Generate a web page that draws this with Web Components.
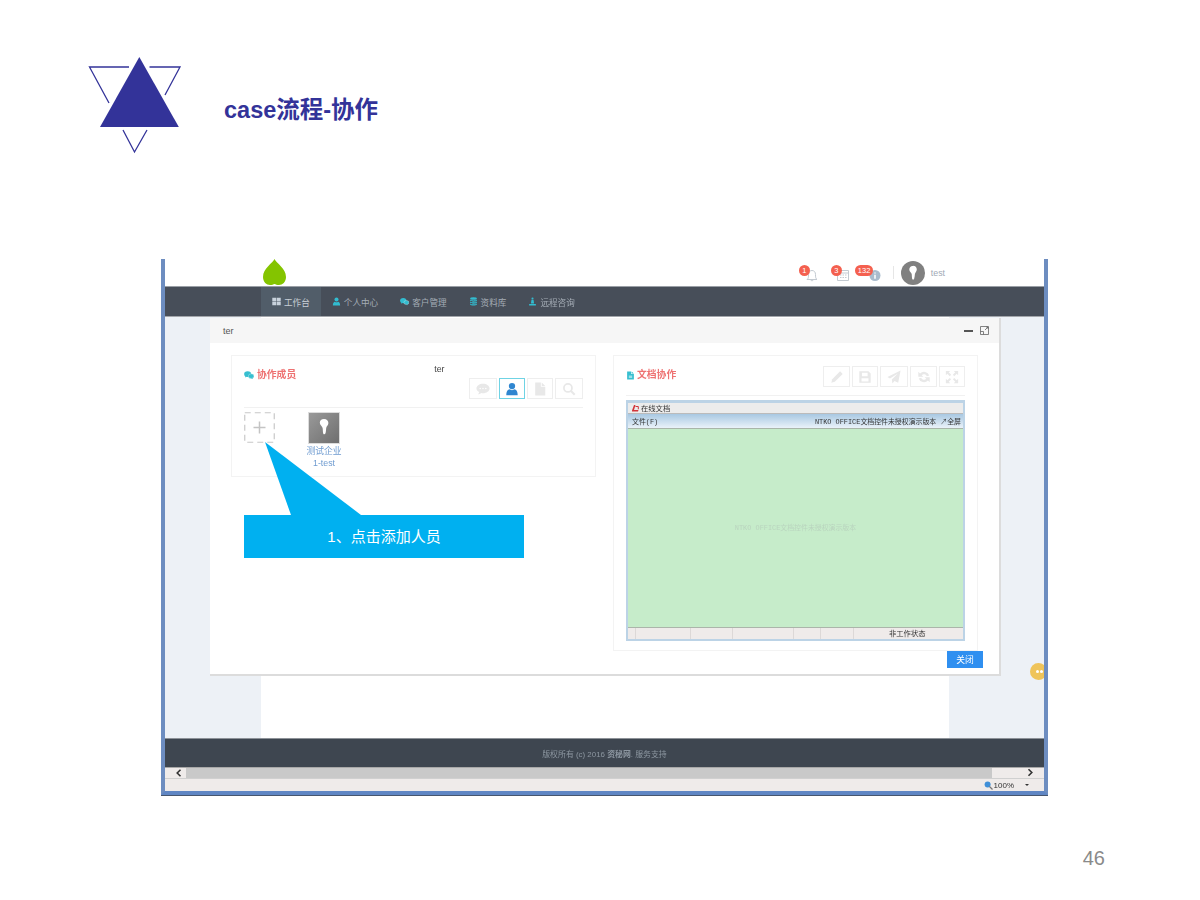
<!DOCTYPE html>
<html lang="zh">
<head>
<meta charset="utf-8">
<title>case流程-协作</title>
<style>
    html, body { margin: 0; background: #fff; }
    body { font-family: "Liberation Sans", "Noto Sans CJK SC", sans-serif; }
</style>
</head>
<body>
<slide-page number="46">
    <slide-header slot="header">case流程-协作</slide-header>
    <browser-window>
        <top-bar slot="top"></top-bar>
        <app-nav slot="nav">
            <nav-item icon="grid" active>工作台</nav-item>
            <nav-item icon="user">个人中心</nav-item>
            <nav-item icon="chat">客户管理</nav-item>
            <nav-item icon="db">资料库</nav-item>
            <nav-item icon="lamp">远程咨询</nav-item>
        </app-nav>
        <modal-dialog slot="modal" heading="ter">
            <panel-card heading="协作成员" icon="chat" head="52">
                <span slot="note">ter</span>
                <tool-bar slot="tools" top="23">
                    <tool-button icon="comment" w="28"></tool-button>
                    <tool-button icon="user" w="26" active></tool-button>
                    <tool-button icon="file" w="26"></tool-button>
                    <tool-button icon="search" w="28"></tool-button>
                </tool-bar>
                <member-list>
                    <member-card>测试企业<br>1-test</member-card>
                </member-list>
            </panel-card>
            <panel-card heading="文档协作" icon="file" head="40">
                <tool-bar slot="tools" top="11">
                    <tool-button icon="pencil" w="27"></tool-button>
                    <tool-button icon="save" w="26"></tool-button>
                    <tool-button icon="send" w="28"></tool-button>
                    <tool-button icon="refresh" w="27"></tool-button>
                    <tool-button icon="expand" w="26"></tool-button>
                </tool-bar>
                <office-control></office-control>
            </panel-card>
        </modal-dialog>
        <span slot="footer">版权所有 (c) 2016 <b>资秘网</b>. 服务支持</span>
    </browser-window>
    <call-out slot="over">1、点击添加人员</call-out>
</slide-page>

<script>
const ICONS = {
    grid: '<path d="M.5 1.500h7v6h-7zM8.500 1.500h7v6h-7zM.5 8.500h7v6h-7zM8.500 8.500h7v6h-7z"/>',
    user: '<circle cx="8" cy="4.600" r="3.600"/><path d="M1.500 15c0-4.500 2-6.400 3.600-6.600 1.800 1.200 4 1.200 5.800 0 1.600.2 3.600 2.100 3.600 6.600z"/>',
    chat: '<ellipse cx="5.800" cy="6.400" rx="5.600" ry="4.600"/><path d="M2.500 9l-.8 2.800 3-1.600z"/><ellipse cx="11.400" cy="9.800" rx="4.500" ry="3.700" stroke="#fff" stroke-width=".5"/><path d="M13 12.500l1.200 2-3-1.300z"/>',
    db: '<ellipse cx="8" cy="2.800" rx="6" ry="2.300"/><path d="M2 4.600c1 2 11 2 12 0v2.200c-1 2-11 2-12 0zM2 8c1 2 11 2 12 0v2.400c-1 2-11 2-12 0zM2 11.500c1 2 11 2 12 0v1.700c-1 2.400-11 2.400-12 0z"/>',
    lamp: '<circle cx="8" cy="2.600" r="1.900"/><path d="M6.200 5h3.600l1 6.500H5.200zM2 12.400h12V15H2z"/>',
    comment: '<path d="M8 2c4.200 0 7.500 2.400 7.500 5.400S12.200 12.800 8 12.800c-.7 0-1.300 0-2-.2-1 1-2.400 1.500-3.800 1.500.8-.8 1.300-1.700 1.400-2.700C1.600 10.400.5 9 .5 7.400.5 4.400 3.800 2 8 2z"/><g fill="#fff"><circle cx="4.800" cy="7.400" r=".9"/><circle cx="8" cy="7.400" r=".9"/><circle cx="11.200" cy="7.400" r=".9"/></g>',
    file: '<path d="M2.500 .5h6.500v5h5V15.500H2.500zM10 .5l4 4h-4z"/>',
    filedoc: '<path d="M2 1h7v4.500h5V15H2zM10 1l4 3.600h-4z"/><path d="M5 8.500h6v1.200H5zM5 11h6v1.200H5z" fill="#fff"/>',
    search: '<circle cx="6.800" cy="6.800" r="4.600" fill="none" stroke="currentColor" stroke-width="2"/><path d="M10.300 10.300l4.200 4.200" stroke="currentColor" stroke-width="2.400" fill="none"/>',
    pencil: '<path d="M11.500 1.500l3 3L5.500 13.500 1.500 14.500l1-4z"/>',
    save: '<path fill-rule="evenodd" d="M1.500 1.500h10.500l2.500 2.500v10.500H1.500zM4.500 3v4h6.500V3zM4 9.500V13h8V9.500z"/>',
    send: '<path d="M15.500 .5L12.800 14.500 8.500 12.500 6.200 15.300 5.500 10.800 12.500 4 3.400 9.600 .5 8z"/>',
    refresh: '<path d="M14 6.400A6.200 6.200 0 0 0 3.500 4L1.500 2v5.800h5.800L5.400 5.900a3.500 3.500 0 0 1 5.900 1.200zM2 9.600A6.200 6.200 0 0 0 12.500 12l2 2V8.200H8.700l1.900 1.900a3.500 3.500 0 0 1-5.900-1.200z"/>',
    expand: '<path d="M1 1h5L4.300 2.700 7 5.400 5.400 7 2.700 4.300 1 6zM15 1v5l-1.700-1.700L10.600 7 9 5.400l2.700-2.700L10 1zM1 15v-5l1.700 1.700L5.400 9 7 10.600l-2.700 2.700L6 15zM15 15h-5l1.700-1.700L9 10.600 10.600 9l2.700 2.700L15 10z"/>'
};

class UiIcon extends HTMLElement {
    connectedCallback() {
        const size = this.getAttribute('size') || 9;
        const name = this.getAttribute('name');
        this.attachShadow({ mode: 'open' }).innerHTML = `
            <style>
                :host { display: inline-flex; flex: none; color: ${this.getAttribute('color') || 'currentColor'}; }
                svg { display: block; fill: currentColor; }
            </style>
            <svg width="${size}" height="${size}" viewBox="0 0 16 16">${ICONS[name] || ''}</svg>`;
    }
}

class SlidePage extends HTMLElement {
    connectedCallback() {
        this.attachShadow({ mode: 'open' }).innerHTML = `
            <style>
                :host { display: block; width: 1200px; height: 900px; overflow: hidden; }
                .shot { position: relative; width: 887px; margin-left: 161px; }
                .number { text-align: right; padding: 52px 95px 0 0; font-size: 20px; line-height: 23px; color: #8a8a8a; }
            </style>
            <slot name="header"></slot>
            <div class="shot">
                <slot></slot>
                <slot name="over"></slot>
            </div>
            <div class="number">${this.getAttribute('number')}</div>`;
    }
}

class SlideHeader extends HTMLElement {
    connectedCallback() {
        this.attachShadow({ mode: 'open' }).innerHTML = `
            <style>
                :host { display: flex; height: 259px; box-sizing: border-box; padding: 56px 0 0 88px; align-items: flex-start; }
                svg { display: block; flex: none; }
                h1 { margin: 27px 0 0 42px; font-size: 23.500px; line-height: 54px; font-weight: bold; color: #333399; white-space: nowrap; }
            </style>
            <svg width="94" height="98" viewBox="88 56 94 98">
                <polygon points="139.300,57 178.800,127 100,127" fill="#333399"/>
                <g fill="none" stroke="#333399" stroke-width="1.300">
                    <polyline points="129,67 89.500,67 109,103"/>
                    <polyline points="149.500,67 180,67 165,95"/>
                    <polyline points="123,130 134.500,152 147,130"/>
                </g>
            </svg>
            <h1><slot></slot></h1>`;
    }
}

class BrowserWindow extends HTMLElement {
    connectedCallback() {
        this.attachShadow({ mode: 'open' }).innerHTML = `
            <style>
                :host { display: block; height: 536px; box-sizing: border-box; background: #fff;
                    border: 4px solid #6d8dc0; border-top: 0; border-bottom-color: #5f86c4;
                    box-shadow: 0 1px 0 #47566e; filter: blur(.35px); }
                .main { position: relative; height: 421px; background: #edf1f6; }
                .column { height: 421px; width: 688px; margin-left: 96px; background: #fff; }
                footer { height: 29px; background: #3e4650; border-top: 1px solid #8d9298; box-sizing: border-box;
                    display: flex; align-items: center; justify-content: center;
                    font-size: 7.900px; color: #8d97a1; }
                .scroll { display: flex; height: 11px; background: #efebea; border-top: 1px solid #a8a8a8; box-sizing: border-box; }
                .arrow { width: 21px; box-sizing: border-box; padding-left: 10px; display: flex; align-items: center; }
                .track { width: 806px; background: #c9c9c9; }
                .rest { flex: 1; display: flex; justify-content: flex-end; padding-right: 10px; }
                .scroll svg { display: block; }
                .status { height: 13px; background: #efebea; border-top: 1px solid #d0d0d0; box-sizing: border-box;
                    display: flex; align-items: center; justify-content: flex-end; gap: 1px; padding-right: 15px;
                    font-size: 8px; color: #333; }
                .status svg { display: block; }
                .caret { width: 0; height: 0; border: 2.500px solid transparent; border-top-color: #333; border-bottom: 0; margin-left: 10px; }
                .bubble { position: absolute; right: -3px; top: 346px; width: 17px; height: 17px; border-radius: 50%;
                    background: #efc45a; clip-path: inset(0 3px 0 0); }
                .bubble::before { content: ""; position: absolute; left: 6px; top: 7px; width: 3px; height: 3px; border-radius: 50%;
                    background: #fff; box-shadow: 4px 0 0 #fff; }
            </style>
            <slot name="top"></slot>
            <slot name="nav"></slot>
            <div class="main">
                <div class="column"></div>
                <slot name="modal"></slot>
                <div class="bubble"></div>
            </div>
            <footer><slot name="footer"></slot></footer>
            <div class="scroll">
                <div class="arrow"><svg width="8" height="8" viewBox="0 0 8 8"><path d="M5.500 .8L2.200 4l3.300 3.200" fill="none" stroke="#333" stroke-width="1.600"/></svg></div>
                <div class="track"></div>
                <div class="rest"><svg width="8" height="9" viewBox="0 0 8 8"><path d="M2.500 .8L5.800 4 2.500 7.200" fill="none" stroke="#333" stroke-width="1.600"/></svg></div>
            </div>
            <div class="status">
                <svg width="9" height="9" viewBox="0 0 9 9"><circle cx="3.600" cy="3.400" r="3" fill="#3f8fd8"/><path d="M5.500 5.500L8.500 8.500" stroke="#777" stroke-width="1.300"/></svg>
                <span>100%</span>
                <i class="caret"></i>
            </div>`;
    }
}

class TopBar extends HTMLElement {
    connectedCallback() {
        this.attachShadow({ mode: 'open' }).innerHTML = `
            <style>
                :host { display: flex; height: 28px; background: #fff; box-sizing: border-box; padding-left: 97px; border-bottom: 1px solid #9a9fa6; }
                .leaf { display: block; }
                .right { margin-left: auto; display: flex; align-items: center; padding-right: 99px; }
                .alert { position: relative; display: block; height: 15px; margin-top: 3px; }
                .alert svg { display: block; }
                .badge { position: absolute; top: -2px; height: 11px; min-width: 11px; box-sizing: border-box; padding: 0 2px; border-radius: 6px;
                    background: #f4604f; color: #fff; font-size: 7.500px; line-height: 11px; text-align: center; }
                .bar { width: 1px; height: 13px; background: #e6e6e6; margin: 0 7px 0 12px; }
                .face { width: 24px; height: 24px; display: block; }
                .name { margin-left: 6px; font-size: 8.800px; color: #9fa9b5; }
            </style>
            <svg class="leaf" width="25" height="27" viewBox="0 0 25 27">
                <path d="M12.500 0C14 4 24 9 24 18 24 23 20.500 26 17 26 15 26 13.500 25.400 12.500 25 11.500 25.400 10 26 8 26 4.500 26 1 23 1 18 1 9 11 4 12.500 0z" fill="#84c400"/>
            </svg>
            <div class="right">
                <span class="alert" style="width:32px">
                    <svg width="32" height="15" viewBox="0 0 32 15"><path d="M8 12.500c1.500-1 1.500-2.500 1.500-5 0-2.500 1.500-4 3.500-4s3.500 1.500 3.500 4c0 2.500 0 4 1.500 5zM11.800 13a1.300 1.300 0 0 0 2.400 0" fill="none" stroke="#c3cad1"/></svg>
                    <span class="badge" style="left:0">1</span>
                </span>
                <span class="alert" style="width:24px">
                    <svg width="24" height="15" viewBox="0 0 24 15"><path d="M6.500 3.500h11v10h-11zM6.500 6h11M9 8h1.500M11.500 8H13M14 8h1.500M9 10.500h1.500M11.500 10.500H13M14 10.500h1.500" fill="none" stroke="#c3cad1"/></svg>
                    <span class="badge" style="left:0">3</span>
                </span>
                <span class="alert" style="width:26px">
                    <svg width="26" height="15" viewBox="0 0 26 15"><circle cx="20" cy="8.500" r="5.500" fill="#a9bccd"/><path d="M20 5.500v1M20 7.800v4" stroke="#fff" stroke-width="1.500"/></svg>
                    <span class="badge" style="left:0;padding:0 3px">132</span>
                </span>
                <span class="bar"></span>
                <svg class="face" viewBox="0 0 24 24"><circle cx="12" cy="12" r="12" fill="#808080"/><path d="M12 4.800c2.400 0 3.800 1.500 3.800 3.600 0 2-1.700 3-1.900 4.600-.1 1.500-.3 3.500-.8 5-.3.800-1.600.8-1.900-.1-.4-1.500-.3-3.400-.5-4.800-.3-1.600-2.400-2.600-2.400-4.700 0-2.100 1.700-3.600 4.700-3.600z" fill="#fff"/></svg>
                <span class="name">test</span>
            </div>`;
    }
}

class AppNav extends HTMLElement {
    connectedCallback() {
        this.attachShadow({ mode: 'open' }).innerHTML = `
            <style>
                :host { display: flex; height: 30px; background: #474e59; padding-left: 96px; box-sizing: border-box; border-bottom: 1px solid #a3a6ab; }
            </style>
            <slot></slot>`;
    }
}

class NavItem extends HTMLElement {
    connectedCallback() {
        const active = this.hasAttribute('active');
        this.attachShadow({ mode: 'open' }).innerHTML = `
            <style>
                :host { display: flex; align-items: center; gap: 3px; padding: 0 11px;
                    font-size: 8.600px; color: ${active ? '#c8ced5' : '#a5adb6'}; background: ${active ? '#515d69' : 'none'}; }
            </style>
            <ui-icon name="${this.getAttribute('icon')}" size="9" color="${active ? '#c8d2dc' : '#32bcd0'}"></ui-icon>
            <slot></slot>`;
    }
}

class ModalDialog extends HTMLElement {
    connectedCallback() {
        this.attachShadow({ mode: 'open' }).innerHTML = `
            <style>
                :host { position: absolute; left: 45px; top: 1px; width: 789px; height: 356px; box-sizing: border-box;
                    background: #fff; box-shadow: 1px 1px 0 1px #dcdcdc; display: flex; flex-direction: column; }
                header { height: 25px; flex: none; background: #f6f6f6; display: flex; align-items: center; padding: 0 10px 0 13px;
                    font-size: 9px; color: #555; }
                .min { margin-left: auto; width: 9px; height: 2px; background: #555; }
                .max { display: block; margin-left: 7px; }
                .body { display: grid; grid-template-columns: 365px 365px; gap: 17px; padding: 12px 21px 0; align-items: start; }
                footer { display: flex; justify-content: flex-end; padding-right: 16px; }
                button { width: 36px; height: 17px; padding: 0; border: 0; background: #2f8ff0; color: #fff; font: inherit; font-size: 8.800px; }
            </style>
            <header>
                <span>${this.getAttribute('heading')}</span>
                <i class="min"></i>
                <svg class="max" width="9" height="9" viewBox="0 0 9 9"><path d="M.5.500h8v8h-8zM.5 5.500h3v3M5 4l3-3M6 1h2v2" fill="none" stroke="#666" stroke-width=".8"/></svg>
            </header>
            <div class="body"><slot></slot></div>
            <footer><button>关闭</button></footer>`;
    }
}

class PanelCard extends HTMLElement {
    connectedCallback() {
        const isDoc = this.getAttribute('heading') === '文档协作';
        this.attachShadow({ mode: 'open' }).innerHTML = `
            <style>
                :host { display: block; border: 1px solid #f3f3f3; box-sizing: border-box; padding: 0 12px; height: ${isDoc ? 296 : 122}px; }
                .head { display: flex; height: ${this.getAttribute('head') - 1}px; border-bottom: 1px solid #f1f1f1; align-items: flex-start; }
                .title { display: flex; align-items: center; gap: ${isDoc ? 2 : 3}px; margin-top: 11px; font-size: 9.800px; line-height: 16px; font-weight: bold; color: #ee7272; }
                ::slotted([slot=note]) { margin: 6px 0 0 138px; font-size: 8.800px; line-height: 14px; color: #444; }
                ::slotted([slot=tools]) { margin-left: auto; }
            </style>
            <div class="head">
                <div class="title">
                    <ui-icon name="${isDoc ? 'filedoc' : 'chat'}" size="${isDoc ? 9 : 10}" color="#37bfd0"></ui-icon>
                    <span>${this.getAttribute('heading')}</span>
                </div>
                <slot name="note"></slot>
                <slot name="tools"></slot>
            </div>
            <slot></slot>`;
    }
}

class ToolBar extends HTMLElement {
    connectedCallback() {
        this.attachShadow({ mode: 'open' }).innerHTML = `
            <style>
                :host { display: flex; gap: 2px; margin-top: ${this.getAttribute('top') - 1}px; }
            </style>
            <slot></slot>`;
    }
}

class ToolButton extends HTMLElement {
    connectedCallback() {
        const active = this.hasAttribute('active');
        this.attachShadow({ mode: 'open' }).innerHTML = `
            <style>
                :host { display: flex; align-items: center; justify-content: center; box-sizing: border-box; height: 21px;
                    width: ${this.getAttribute('w')}px; border: 1px solid ${active ? '#6fd3e4' : '#eeeeee'}; }
            </style>
            <ui-icon name="${this.getAttribute('icon')}" size="14" color="${active ? '#2f86d0' : '#e8e8e8'}"></ui-icon>`;
    }
}

class MemberList extends HTMLElement {
    connectedCallback() {
        this.attachShadow({ mode: 'open' }).innerHTML = `
            <style>
                :host { display: flex; align-items: flex-start; padding-top: 4px; }
                .add { display: block; margin-right: 24px; flex: none; }
            </style>
            <svg class="add" width="31" height="31" viewBox="0 0 31 31">
                <rect x=".75" y=".75" width="29.500" height="29.500" fill="none" stroke="#c8c8c8" stroke-width="1.200" stroke-dasharray="6 4"/>
                <path d="M15.500 9.500v12M9.500 15.500h12" stroke="#c4c4c4" stroke-width="1.500"/>
            </svg>
            <slot></slot>`;
    }
}

class MemberCard extends HTMLElement {
    connectedCallback() {
        this.attachShadow({ mode: 'open' }).innerHTML = `
            <style>
                :host { display: flex; flex-direction: column; align-items: center; width: 50px; font-size: 8.800px; line-height: 12px; color: #6e9bd0; text-align: center; }
                svg { display: block; margin-bottom: 1px; }
            </style>
            <svg width="32" height="32" viewBox="0 0 32 32">
                <defs><linearGradient id="g" x1="0" y1="0" x2="1" y2="1"><stop offset="0" stop-color="#9a9a9a"/><stop offset="1" stop-color="#6e6e6e"/></linearGradient></defs>
                <rect x=".5" y=".5" width="31" height="31" fill="url(#g)" stroke="#dcdcdc"/>
                <path d="M16 7c2.800 0 4.400 1.700 4.400 4 0 2.300-2 3.300-2.200 5-.2 1.700-.2 4-.8 5.600-.4 1-1.800 1-2.200-.1-.4-1.700-.3-3.900-.6-5.500-.4-1.800-2.800-2.800-2.800-5.200C11.800 8.600 13.400 7 16 7z" fill="#fff"/>
            </svg>
            <div><slot></slot></div>`;
    }
}

class OfficeControl extends HTMLElement {
    connectedCallback() {
        const cells = [8, 55, 42, 61, 27, 33];
        this.attachShadow({ mode: 'open' }).innerHTML = `
            <style>
                :host { display: block; margin-top: 4px; height: 241px; box-sizing: border-box; border: 2px solid #bcd3e6; border-top-width: 3px;
                    font-size: 8px; color: #333; font-family: "Liberation Mono", "Noto Sans CJK SC", monospace; }
                .cap { height: 11px; background: #ececec; display: flex; align-items: center; gap: 2px; padding-left: 3px; border-bottom: 1px solid #bbb; box-sizing: border-box;
                    font-family: "Liberation Sans", "Noto Sans CJK SC", sans-serif; font-size: 7.300px; }
                .cap svg { display: block; }
                .tools { height: 15px; background: linear-gradient(#a8c8e2, #eaf2f9); display: flex; align-items: center; justify-content: space-between; padding: 0 2px 0 4px;
                    border-bottom: 1px solid #a9b5a9; box-sizing: border-box; font-size: 6.900px; }
                .sheet { height: 199px; background: #c6ecca; display: flex; align-items: center; justify-content: center; box-sizing: border-box; border-bottom: 1px solid #abb5aa;
                    color: #b9d4be; font-size: 6.900px; padding: 0 0 3px 0; }
                .state { height: 11px; display: flex; background: #efebea; font-family: "Liberation Sans", "Noto Sans CJK SC", sans-serif; font-size: 7.300px; }
                .state i { display: block; flex: none; border-right: 1px solid #dcd8d7; box-sizing: border-box; }
                .state span { flex: 1; padding-left: 35px; line-height: 11px; white-space: nowrap; }
            </style>
            <div class="cap">
                <svg width="8" height="8" viewBox="0 0 8 8"><path d="M1 6.500L3 1h1.500L3 6h4.500L7 7.500H1z" fill="#d2343a"/><path d="M4.500 2.500h2.800v2.800" fill="none" stroke="#d2343a"/></svg>
                <span>在线文档</span>
            </div>
            <div class="tools"><span>文件(F)</span><span>NTKO OFFICE文档控件未授权演示版本 ↗全屏</span></div>
            <div class="sheet">NTKO OFFICE文档控件未授权演示版本</div>
            <div class="state">
                ${cells.map(w => `<i style="width:${w}px"></i>`).join('')}
                <span>非工作状态</span>
            </div>`;
    }
}

class CallOut extends HTMLElement {
    connectedCallback() {
        this.attachShadow({ mode: 'open' }).innerHTML = `
            <style>
                :host { position: absolute; left: 83px; top: 183px; width: 280px; display: block; }
                svg { display: block; }
                div { height: 43px; box-sizing: border-box; padding-bottom: 3px; background: #00b0f0; color: #fff; display: flex; align-items: center; justify-content: center;
                    font-size: 15px; }
            </style>
            <svg width="280" height="73" viewBox="0 0 280 73"><polygon points="21,0 47,73 117,73" fill="#00b0f0"/></svg>
            <div><slot></slot></div>`;
    }
}

customElements.define('ui-icon', UiIcon);
customElements.define('slide-page', SlidePage);
customElements.define('slide-header', SlideHeader);
customElements.define('browser-window', BrowserWindow);
customElements.define('top-bar', TopBar);
customElements.define('app-nav', AppNav);
customElements.define('nav-item', NavItem);
customElements.define('modal-dialog', ModalDialog);
customElements.define('panel-card', PanelCard);
customElements.define('tool-bar', ToolBar);
customElements.define('tool-button', ToolButton);
customElements.define('member-list', MemberList);
customElements.define('member-card', MemberCard);
customElements.define('office-control', OfficeControl);
customElements.define('call-out', CallOut);
</script>
</body>
</html>
